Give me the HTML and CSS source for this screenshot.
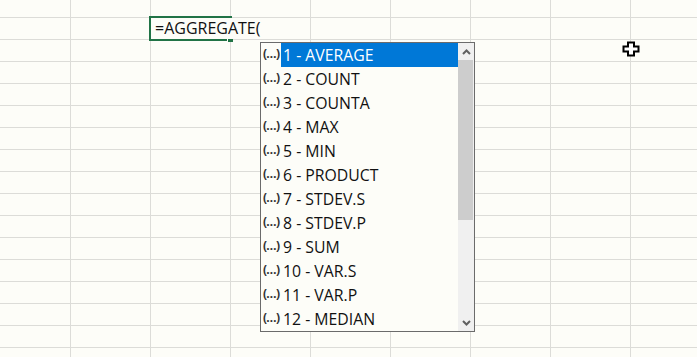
FILE: index.html
```html
<!DOCTYPE html>
<html>
<head>
<meta charset="utf-8">
<link rel="stylesheet" href="styles.css">
</head>
<body>
<div class="sheet">
  <div class="grid">
    <div class="row first"><div></div><div></div><div></div><div></div><div></div><div></div><div></div><div></div><div></div></div>
    <div class="row"><div></div><div></div><div></div><div></div><div></div><div></div><div></div><div></div><div></div></div>
    <div class="row"><div></div><div></div><div></div><div></div><div></div><div></div><div></div><div></div><div></div></div>
    <div class="row"><div></div><div></div><div></div><div></div><div></div><div></div><div></div><div></div><div></div></div>
    <div class="row"><div></div><div></div><div></div><div></div><div></div><div></div><div></div><div></div><div></div></div>
    <div class="row"><div></div><div></div><div></div><div></div><div></div><div></div><div></div><div></div><div></div></div>
    <div class="row"><div></div><div></div><div></div><div></div><div></div><div></div><div></div><div></div><div></div></div>
    <div class="row"><div></div><div></div><div></div><div></div><div></div><div></div><div></div><div></div><div></div></div>
    <div class="row"><div></div><div></div><div></div><div></div><div></div><div></div><div></div><div></div><div></div></div>
    <div class="row"><div></div><div></div><div></div><div></div><div></div><div></div><div></div><div></div><div></div></div>
    <div class="row"><div></div><div></div><div></div><div></div><div></div><div></div><div></div><div></div><div></div></div>
    <div class="row"><div></div><div></div><div></div><div></div><div></div><div></div><div></div><div></div><div></div></div>
    <div class="row"><div></div><div></div><div></div><div></div><div></div><div></div><div></div><div></div><div></div></div>
    <div class="row"><div></div><div></div><div></div><div></div><div></div><div></div><div></div><div></div><div></div></div>
    <div class="row"><div></div><div></div><div></div><div></div><div></div><div></div><div></div><div></div><div></div></div>
    <div class="row"><div></div><div></div><div></div><div></div><div></div><div></div><div></div><div></div><div></div></div>
    <div class="row"><div></div><div></div><div></div><div></div><div></div><div></div><div></div><div></div><div></div></div>
  </div>

  <div class="editor"><span class="handle"></span></div>
  <div class="formula">=AGGREGATE(</div>

  <div class="dropdown">
    <ul class="list">
      <li class="item selected"><span class="ico">(…)</span><span class="label">1 - AVERAGE</span></li>
      <li class="item"><span class="ico">(…)</span><span class="label">2 - COUNT</span></li>
      <li class="item"><span class="ico">(…)</span><span class="label">3 - COUNTA</span></li>
      <li class="item"><span class="ico">(…)</span><span class="label">4 - MAX</span></li>
      <li class="item"><span class="ico">(…)</span><span class="label">5 - MIN</span></li>
      <li class="item"><span class="ico">(…)</span><span class="label">6 - PRODUCT</span></li>
      <li class="item"><span class="ico">(…)</span><span class="label">7 - STDEV.S</span></li>
      <li class="item"><span class="ico">(…)</span><span class="label">8 - STDEV.P</span></li>
      <li class="item"><span class="ico">(…)</span><span class="label">9 - SUM</span></li>
      <li class="item"><span class="ico">(…)</span><span class="label">10 - VAR.S</span></li>
      <li class="item"><span class="ico">(…)</span><span class="label">11 - VAR.P</span></li>
      <li class="item"><span class="ico">(…)</span><span class="label">12 - MEDIAN</span></li>
    </ul>
    <div class="scrollbar">
      <div class="arrow up"><svg width="9" height="6" viewBox="0 0 9 6"><path d="M1 5 L4.5 1.5 L8 5" fill="none" stroke="#606060" stroke-width="2"/></svg></div>
      <div class="track"><div class="thumb"></div></div>
      <div class="arrow down"><svg width="9" height="6" viewBox="0 0 9 6"><path d="M1 1 L4.5 4.5 L8 1" fill="none" stroke="#606060" stroke-width="2"/></svg></div>
    </div>
  </div>

  <svg class="cursor" width="19" height="17" viewBox="0 0 19 17">
    <path d="M6 1.5 H12 V5.5 H16.5 V10.5 H12 V14.5 H6 V10.5 H1.5 V5.5 H6 Z" fill="#fff" stroke="#000" stroke-width="2" stroke-linejoin="miter"/>
  </svg>
</div>
</body>
</html>
```

FILE: styles.css
```css
* { box-sizing: border-box; }
html, body {
  margin: 0;
  padding: 0;
  background: #fdfdf8;
  overflow: hidden;
}
.sheet {
  position: relative;
  width: 697px;
  height: 357px;
  overflow: hidden;
  font-family: "Open Sans", "Noto Sans", sans-serif;
}
.grid {
  display: flex;
  flex-direction: column;
}
.row {
  display: flex;
  height: 22px;
  flex: none;
}
.row.first { height: 18px; }
.row > div {
  flex: none;
  width: 80px;
  height: 100%;
  border-right: 1px solid #dcdcd8;
  border-bottom: 1px solid #dcdcd8;
}
.row > div:first-child { width: 71px; }

.editor {
  position: absolute;
  left: 149px;
  top: 16px;
  width: 83px;
  height: 25px;
  border: 2px solid #217346;
}
.handle {
  position: absolute;
  right: -3px;
  bottom: -3px;
  width: 6px;
  height: 5px;
  background: #217346;
  border-left: 1px solid #fdfdf8;
  border-top: 1px solid #fdfdf8;
}
.formula {
  position: absolute;
  left: 151px;
  top: 18px;
  height: 21px;
  line-height: 21px;
  padding: 0 2px 0 4px;
  font-size: 16px;
  color: #111;
  background: #fdfdf8;
  white-space: nowrap;
}

.dropdown {
  position: absolute;
  left: 260px;
  top: 42px;
  width: 215px;
  height: 290px;
  border: 1px solid #6b6b6b;
  background: #fdfdf8;
  display: flex;
}
.list {
  list-style: none;
  margin: 0;
  padding: 0;
  flex: 1;
  display: flex;
  flex-direction: column;
}
.item {
  height: 24px;
  display: flex;
  align-items: center;
  font-size: 15.8px;
  color: #111;
  white-space: nowrap;
}
.ico {
  width: 20px;
  flex: none;
  padding-left: 2px;
  font-size: 12px;
  font-weight: bold;
  color: #333;
  letter-spacing: -0.7px;
  position: relative;
  top: -2px;
}
.label {
  flex: 1;
  height: 24px;
  line-height: 24px;
  padding-left: 2px;
}
.item.selected .label {
  background: #0078d7;
  color: #fff;
}
.scrollbar {
  width: 16px;
  flex: none;
  background: #f0f0f0;
  display: flex;
  flex-direction: column;
}
.arrow {
  height: 17px;
  display: flex;
  align-items: center;
  justify-content: center;
  flex: none;
}
.track {
  flex: 1;
  padding-right: 1px;
}
.thumb {
  height: 160px;
  background: #cdcdcd;
}
.cursor {
  position: absolute;
  left: 622px;
  top: 41px;
}
```
